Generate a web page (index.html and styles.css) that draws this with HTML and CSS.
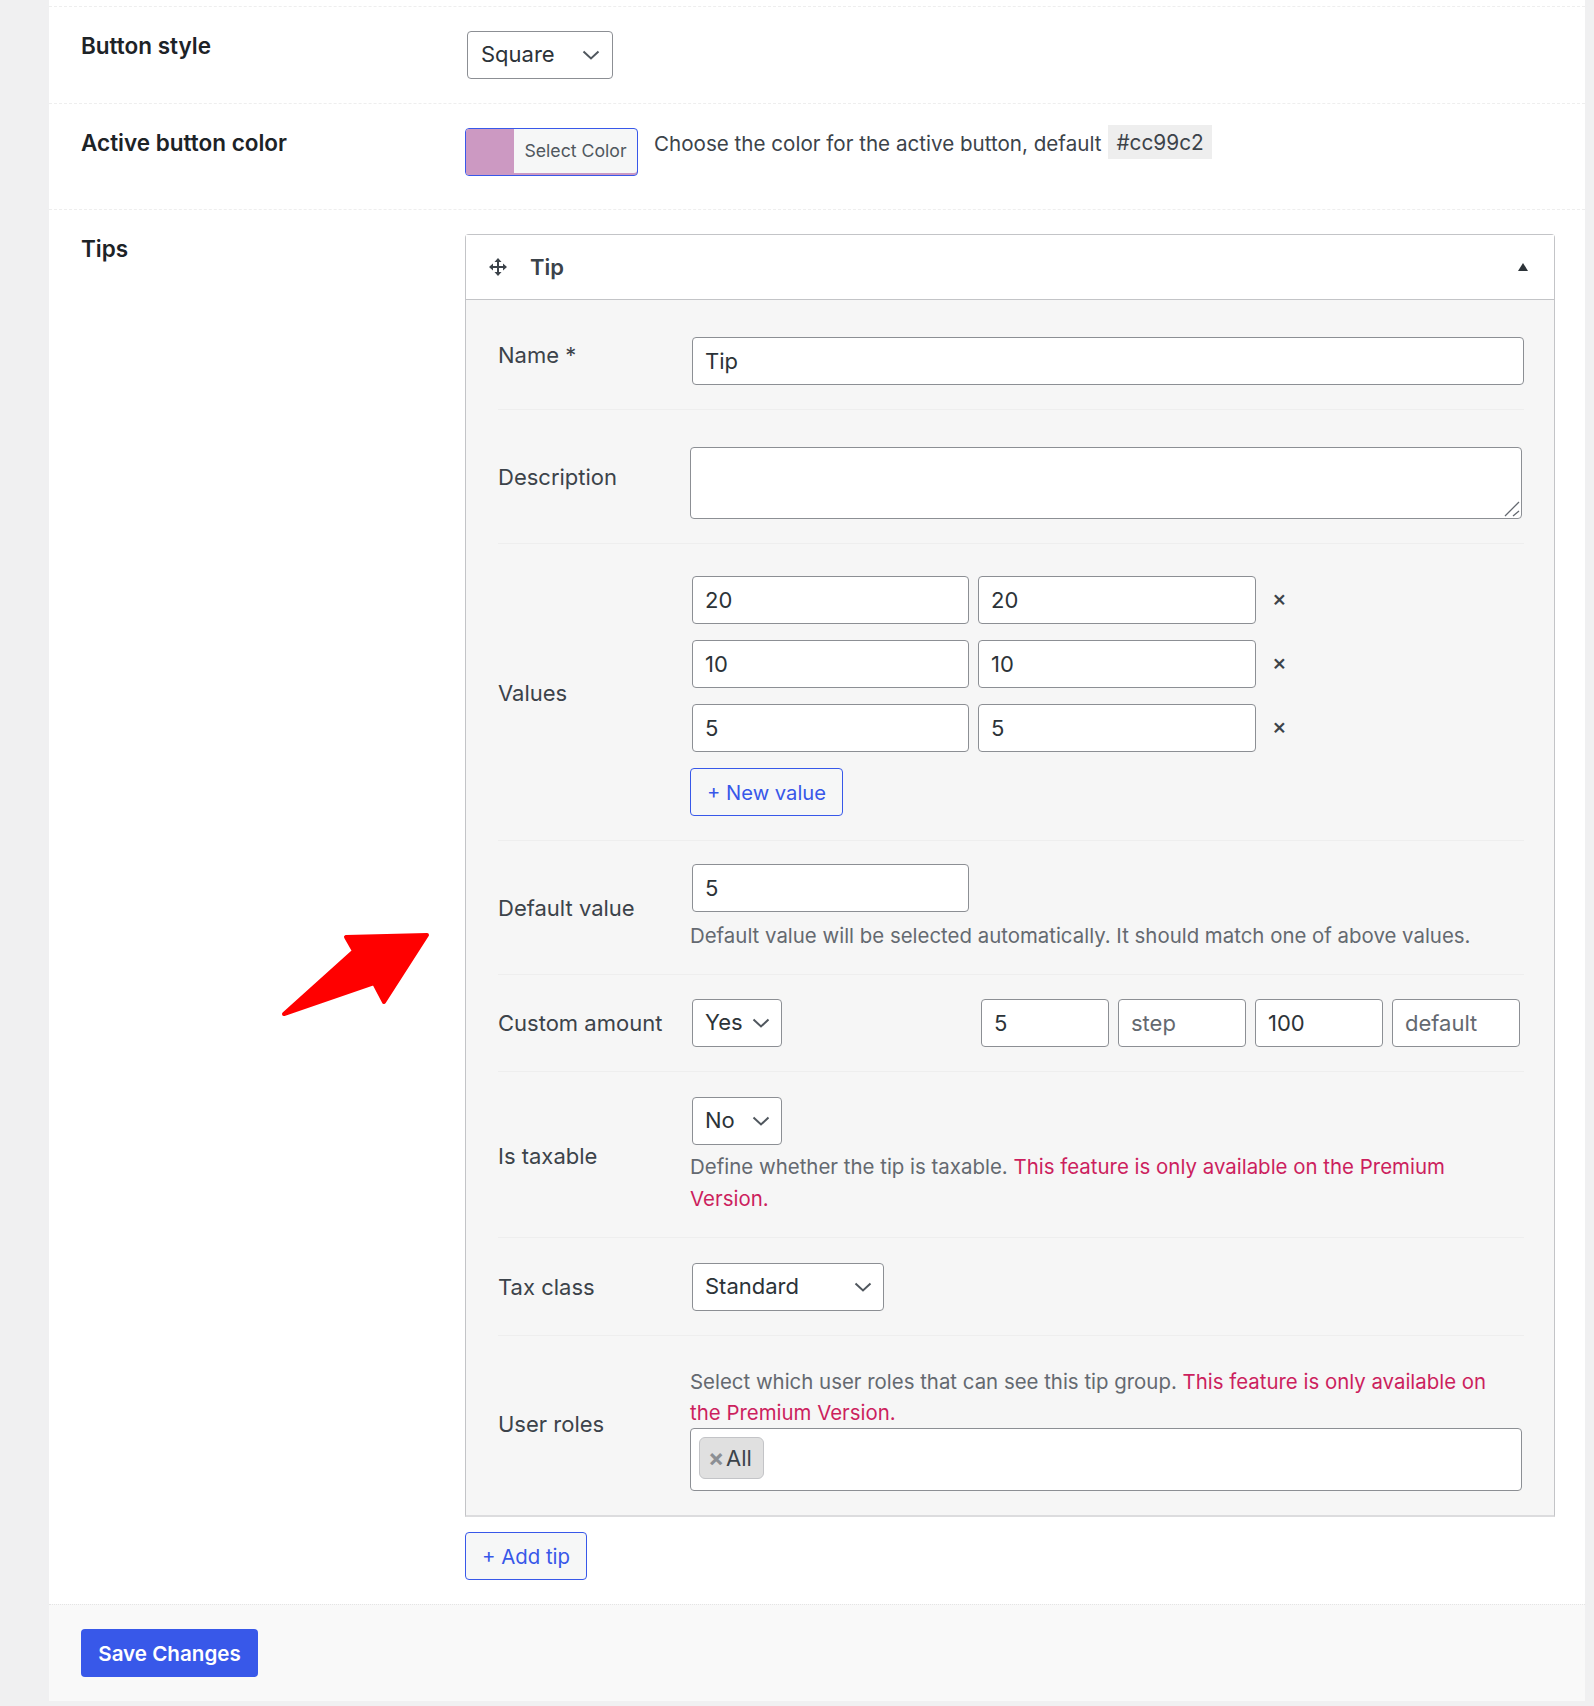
FILE: index.html
```html
<!DOCTYPE html>
<html lang="en">
<head>
<meta charset="utf-8">
<title>Tips settings</title>
<link rel="stylesheet" href="styles.css">
</head>
<body>
<main class="panel">
  <section class="setting setting-first">
    <div class="setting-label">Button style</div>
    <div class="setting-field">
      <div class="select-wrap select-square">
        <select class="control select"><option>Square</option></select>
        <svg class="chevron" viewBox="0 0 18 10"><path d="M1.500 1.500 9 8.500l7.500-7"/></svg>
      </div>
    </div>
  </section>
  <section class="setting setting-color">
    <div class="setting-label">Active button color</div>
    <div class="setting-field color-field">
      <button class="color-button" type="button"><span class="color-swatch"></span><span class="color-text">Select Color</span></button>
      <p class="color-desc">Choose the color for the active button, default</p>
      <code class="code-chip">#cc99c2</code>
    </div>
  </section>
  <section class="setting setting-tips">
    <div class="setting-label">Tips</div>
    <div class="setting-field">
      <div class="tip-box">
        <header class="tip-head">
          <svg class="move-icon" viewBox="0 0 18 18"><path class="move-line" d="M9 2v14M2 9h14"/><path class="move-tip" d="M9 0l3.500 4h-7zM9 18l-3.500-4h7zM0 9l4-3.500v7zM18 9l-4 3.500v-7z"/></svg>
          <span class="tip-title">Tip</span>
          <span class="caret"></span>
        </header>
        <div class="tip-body">
          <div class="row row-name">
            <label class="row-label row-label-top">Name *</label>
            <input class="control input input-full" value="Tip">
          </div>
          <div class="row row-desc">
            <label class="row-label row-label-desc">Description</label>
            <div class="textarea-wrap">
              <textarea class="control textarea"></textarea>
              <svg class="grip" viewBox="0 0 16 16"><path d="M1 15 15 1M9 15l6-5"/></svg>
            </div>
          </div>
          <div class="row row-values">
            <label class="row-label row-label-values">Values</label>
            <div class="values">
              <div class="value-line"><input class="control input input-value" value="20"><input class="control input input-value" value="20"><span class="remove">×</span></div>
              <div class="value-line"><input class="control input input-value" value="10"><input class="control input input-value" value="10"><span class="remove">×</span></div>
              <div class="value-line"><input class="control input input-value" value="5"><input class="control input input-value" value="5"><span class="remove">×</span></div>
              <button class="outline-button new-value" type="button">+ New value</button>
            </div>
          </div>
          <div class="row row-default">
            <label class="row-label">Default value</label>
            <div>
              <input class="control input input-value input-default" value="5">
              <p class="help help-default">Default value will be selected automatically. It should match one of above values.</p>
            </div>
          </div>
          <div class="row row-custom">
            <label class="row-label">Custom amount</label>
            <div class="custom">
              <div class="select-wrap select-small">
                <select class="control select"><option>Yes</option></select>
                <svg class="chevron" viewBox="0 0 18 10"><path d="M1.500 1.500 9 8.500l7.500-7"/></svg>
              </div>
              <div class="custom-inputs">
                <input class="control input input-small" value="5">
                <input class="control input input-small" placeholder="step">
                <input class="control input input-small" value="100">
                <input class="control input input-small" placeholder="default">
              </div>
            </div>
          </div>
          <div class="row row-taxable">
            <label class="row-label">Is taxable</label>
            <div>
              <div class="select-wrap select-small select-indent">
                <select class="control select"><option>No</option></select>
                <svg class="chevron" viewBox="0 0 18 10"><path d="M1.500 1.500 9 8.500l7.500-7"/></svg>
              </div>
              <p class="help help-taxable">Define whether the tip is taxable. <span class="premium">This feature is only available on the Premium Version.</span></p>
            </div>
          </div>
          <div class="row row-tax">
            <label class="row-label">Tax class</label>
            <div class="select-wrap select-tax">
              <select class="control select"><option>Standard</option></select>
              <svg class="chevron" viewBox="0 0 18 10"><path d="M1.500 1.500 9 8.500l7.500-7"/></svg>
            </div>
          </div>
          <div class="row row-roles">
            <label class="row-label row-label-roles">User roles</label>
            <div>
              <p class="help help-roles">Select which user roles that can see this tip group. <span class="premium">This feature is only available on the Premium Version.</span></p>
              <div class="multi"><span class="chip"><span class="chip-x">×</span>All</span></div>
            </div>
          </div>
        </div>
      </div>
      <button class="outline-button add-tip" type="button">+ Add tip</button>
    </div>
  </section>
  <footer class="panel-foot">
    <button class="save" type="button">Save Changes</button>
  </footer>
  <svg class="arrow" viewBox="0 0 160 100"><path d="M65 11 146 9 103 76 93 57 3 88 73 25z"/></svg>
</main>
</body>
</html>
```
FILE: styles.css
```css
* { box-sizing: border-box; }
html, body { margin: 0; padding: 0; }
body {
  background: #f0f0f1;
  color: #3c434a;
  font-family: Inter, "Liberation Sans", sans-serif;
  font-size: 22px;
  height: 1706px;
  overflow: hidden;
}
p { margin: 0; }
.panel {
  position: relative;
  margin: 0 9px 0 49px;
  height: 1701px;
  background: #fff;
  padding-top: 6px;
}
.setting {
  display: grid;
  grid-template-columns: 384px 1090px;
  padding: 24px 0 24px 32px;
  border-top: 1px dashed #eeeeee;
}
.setting-color { height: 106px; }
.setting-first { height: 97px; }
.setting-label {
  font-size: 22.500px;
  font-weight: 600;
  color: #1d2327;
  line-height: 24px;
  padding-top: 3px;
}
.control {
  font: inherit;
  color: #2c3338;
  background: #fff;
  border: 1px solid #8c8f94;
  border-radius: 4px;
  height: 48px;
  padding: 0 12px;
  outline: none;
  display: block;
  margin: 0;
}
.select-wrap { position: relative; }
.select { appearance: none; -webkit-appearance: none; width: 100%; padding-right: 30px; padding-bottom: 2px; }
.chevron {
  position: absolute;
  right: 13px;
  top: 19px;
  width: 18px;
  height: 10px;
  fill: none;
  stroke: #50575e;
  stroke-width: 2;
}
.select-square { width: 146px; margin-left: 2px; }
.select-square .select { padding-left: 13px; }
.select-small { width: 90px; }
.select-indent { margin-left: 2px; }
.select-tax { width: 192px; margin-left: 2px; }
.select-small .chevron { right: 12px; }
.select-tax .chevron { right: 12px; }

.color-field { display: flex; align-items: flex-start; }
.color-button {
  display: flex;
  width: 173px;
  height: 48px;
  padding: 0;
  overflow: hidden;
  font: inherit;
  background: #f6f7f7;
  border: 1px solid #3858e9;
  border-radius: 4px;
  box-shadow: inset 0 -2px 0 #cc99c2;
}
.color-swatch { width: 48px; height: 100%; background: #cc99c2; }
.color-text { flex: 1; font-size: 17.700px; line-height: 44px; color: #50575e; text-align: center; }
.color-desc { margin: 3px 0 0 16px; line-height: 26px; font-size: 20.600px; }
.code-chip {
  font: inherit;
  font-size: 20.800px;
  background: #eeeeee;
  padding: 0 8px;
  height: 34px;
  line-height: 35px;
  margin: -3px 0 0 7px;
}
.tip-box {
  width: 1090px;
  border: 1px solid #c3c4c7;
  border-radius: 4px 4px 0 0;
  border-bottom: 2px solid #dcdcde;
}
.tip-head {
  display: flex;
  align-items: center;
  height: 65px;
  padding: 0 26px 0 23px;
  border-bottom: 1px solid #c3c4c7;
  background: #fff;
}
.move-icon { width: 18px; height: 18px; fill: #3c434a; }
.move-line { stroke: #3c434a; stroke-width: 2; fill: none; }
.tip-title { margin-left: 23px; font-weight: 600; flex: 1; }
.caret {
  width: 0;
  height: 0;
  border-left: 5px solid transparent;
  border-right: 5px solid transparent;
  border-bottom: 8px solid #2c3338;
}
.tip-body { background: #f6f6f6; padding: 0 30px 0 32px; }
.row {
  display: grid;
  grid-template-columns: 192px 834px;
  align-items: center;
  border-bottom: 1px solid #eeeeee;
}
.row:last-child { border-bottom: 0; }
.row-label { color: #3c434a; line-height: 26px; }
.row-label-top { align-self: start; padding-top: 5px; }
.row-label-desc { padding-bottom: 12px; }
.row-label-values { padding-bottom: 6px; }
.row-label-roles { padding-bottom: 10px; }
.row-name { padding: 37px 0 24px; }
.row-desc { padding: 37px 0 24px; }
.row-values { padding: 32px 0 24px; }
.row-default { padding: 23px 0 22px; }
.row-custom { padding: 24px 0; }
.row-taxable { padding: 25px 0 22px; }
.row-tax { padding: 25px 0 24px; }
.row-roles { padding: 31px 0 24px; }
.input-full { width: 832px; margin-left: 2px; }
.textarea-wrap { position: relative; width: 832px; height: 72px; }
.textarea { width: 100%; height: 100%; resize: none; }
.grip {
  position: absolute;
  right: 2px;
  bottom: 2px;
  width: 16px;
  height: 16px;
  fill: none;
  stroke: #646970;
  stroke-width: 1.300;
}
.values { display: flex; flex-direction: column; gap: 16px; }
.value-line { display: flex; align-items: center; gap: 9px; padding-left: 2px; }
.input-value { width: 277px; }
.input-value + .input-value { width: 278px; }
.input-default { margin-left: 2px; }
.remove { font-size: 22px; font-weight: 500; margin: 0 0 4px 7px; color: #3c434a; }
.outline-button {
  font: inherit;
  font-size: 20.400px;
  color: #3858e9;
  background: #f6f7f7;
  border: 1px solid #3858e9;
  border-radius: 4px;
  height: 48px;
  padding: 0;
}
.new-value { width: 153px; align-self: flex-start; font-size: 20.200px; }
.add-tip { display: block; width: 122px; margin-top: 15px; }
.help { color: #646970; line-height: 32px; font-size: 20.450px; }
.help-default { margin-top: 8px; font-size: 20.420px; }
.help-taxable { margin-top: 6px; }
.help-roles { line-height: 30.500px; font-size: 20.420px; padding-right: 20px; }
.premium { color: #cc1f5e; }
.custom { display: flex; padding-left: 2px; }
.custom-inputs { display: flex; gap: 9px; margin-left: 199px; }
.input-small { width: 128px; }
.input-small::placeholder { color: #646970; opacity: 1; }
.multi {
  height: 63px;
  width: 832px;
  background: #fff;
  border: 1px solid #8c8f94;
  border-radius: 4px;
  padding: 8px;
}
.chip {
  display: inline-flex;
  align-items: center;
  width: 65px;
  height: 42px;
  padding: 0 0 0 8px;
  background: #e0e0e0;
  border: 1px solid #c3c4c7;
  border-radius: 6px;
  color: #3c434a;
}
.chip-x { color: #8c8f94; font-weight: 700; font-size: 24px; line-height: 26px; width: 18px; }
.panel-foot {
  border-top: 1px dotted #e4e4e4;
  background: #f9f9f9;
  padding: 24px 32px;
  height: 97px;
}
.save {
  font: inherit;
  font-size: 20.600px;
  font-weight: 600;
  color: #fff;
  background: #3858e9;
  border: 0;
  border-radius: 4px;
  width: 177px;
  height: 48px;
}
.arrow {
  position: absolute;
  left: 232px;
  top: 926px;
  width: 160px;
  height: 100px;
  fill: #ff0000;
  stroke: #ff0000;
  stroke-width: 4;
  stroke-linejoin: round;
}
```
